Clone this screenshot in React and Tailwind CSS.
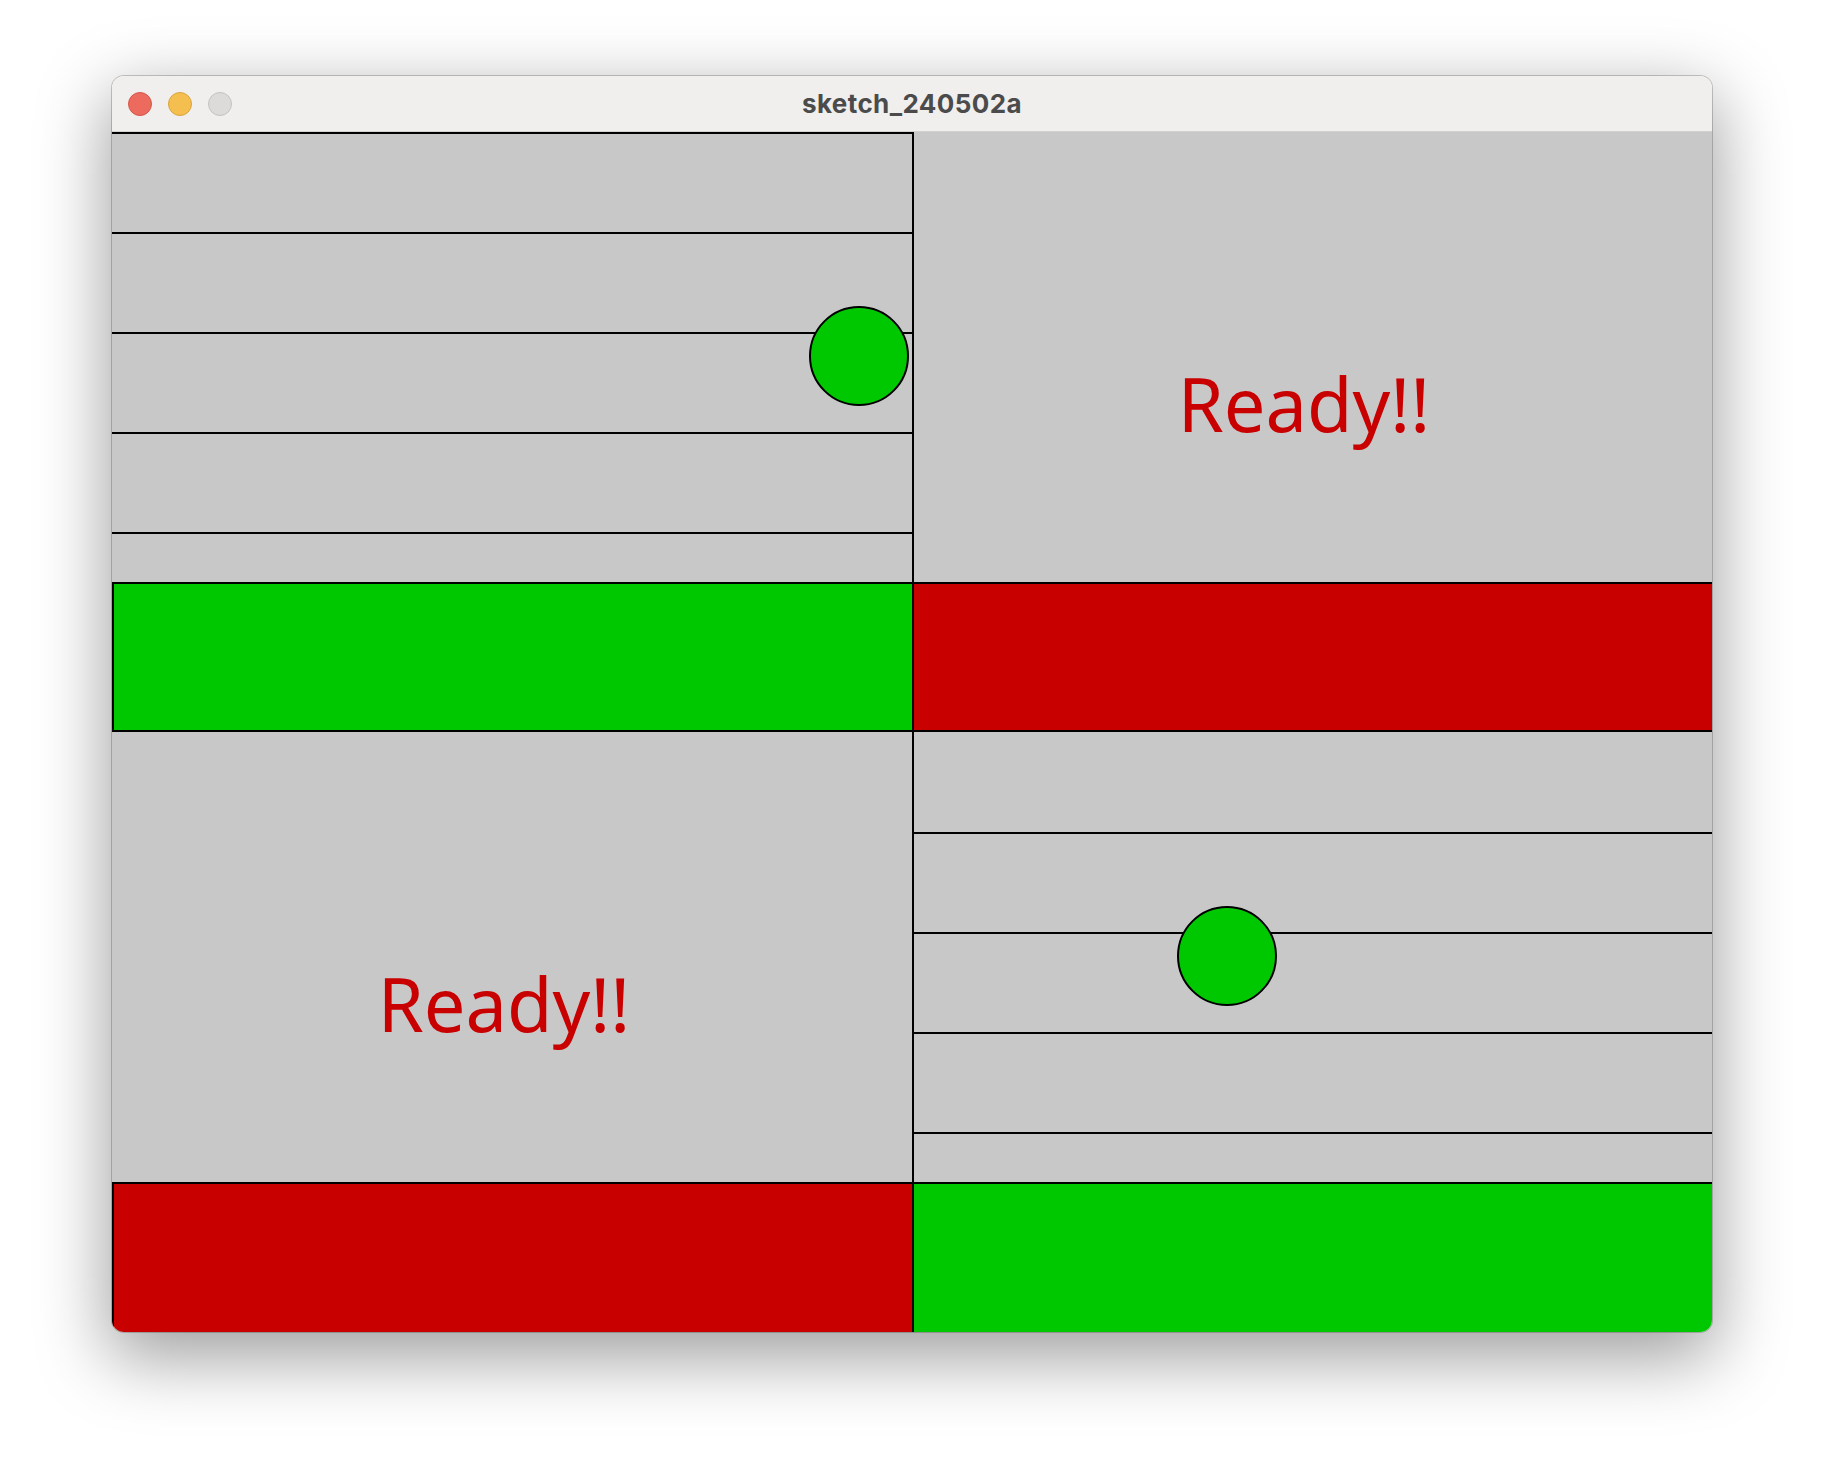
const GRAY = 'bg-[#c8c8c8]';

// one lined lane of the sketch canvas
const Lane = ({ lines, first }) => (
  <div className="flex flex-col">
    {first}
    {Array.from({ length: lines }).map((_, i) => (
      <div key={i} className="h-[100px] border-t-2 border-black" />
    ))}
  </div>
);

const Ball = ({ className }) => (
  <div className={`absolute w-[100px] h-[100px] rounded-full bg-[#00c800] border-2 border-black ${className}`} />
);

const Ready = ({ pad }) => (
  <div className={`pt-[235px] text-center leading-none text-[74px] text-[#c80000] ${pad}`} style={{ fontFamily: '"Noto Sans", sans-serif' }}>
    Ready!!
  </div>
);

export default function App() {
  return (
    <div className="min-h-screen bg-white flex items-start justify-center pt-[76px]" style={{ fontFamily: 'Inter, "Noto Sans", sans-serif' }}>
      <div className="w-[1600px] rounded-[12px] overflow-hidden ring-1 ring-black/20 shadow-[0_22px_70px_4px_rgba(0,0,0,0.38)]">
        {/* title bar */}
        <div className="h-[56px] bg-[#f0efed] border-b border-[#d2d1cf] grid grid-cols-[1fr_auto_1fr] items-center px-4">
          <div className="flex items-center gap-4">
            <span className="w-6 h-6 rounded-full bg-[#ed6a5e] border border-[#d5574b]" />
            <span className="w-6 h-6 rounded-full bg-[#f5bf4f] border border-[#d9a53c]" />
            <span className="w-6 h-6 rounded-full bg-[#dcdbd9] border border-[#c4c3c1]" />
          </div>
          <div className="text-[26px] tracking-[0.4px] font-bold text-[#4b4b4b]">sketch_240502a</div>
          <div />
        </div>

        {/* sketch canvas */}
        <div className="grid grid-cols-[800px_800px] grid-rows-[450px_150px_450px_150px]">
          {/* top-left: lanes with ball */}
          <div className={`${GRAY} relative`}>
            <Lane lines={5} />
            <Ball className="left-[697px] top-[174px]" />
          </div>
          {/* top-right: ready */}
          <div className={`${GRAY} border-l-2 border-black`}>
            <Ready pad="pr-[18px]" />
          </div>

          <div className="bg-[#00c800] border-l-2 border-y-2 border-black" />
          <div className="bg-[#c80000] border-l-2 border-y-2 border-black" />

          {/* bottom-left: ready */}
          <div className={GRAY}>
            <Ready pad="pr-[16px]" />
          </div>
          {/* bottom-right: lanes with ball */}
          <div className={`${GRAY} relative border-l-2 border-black`}>
            <Lane lines={4} first={<div className="h-[100px]" />} />
            <Ball className="left-[263px] top-[174px]" />
          </div>

          <div className="bg-[#c80000] border-l-2 border-t-2 border-black" />
          <div className="bg-[#00c800] border-l-2 border-t-2 border-black" />
        </div>
      </div>
    </div>
  );
}
